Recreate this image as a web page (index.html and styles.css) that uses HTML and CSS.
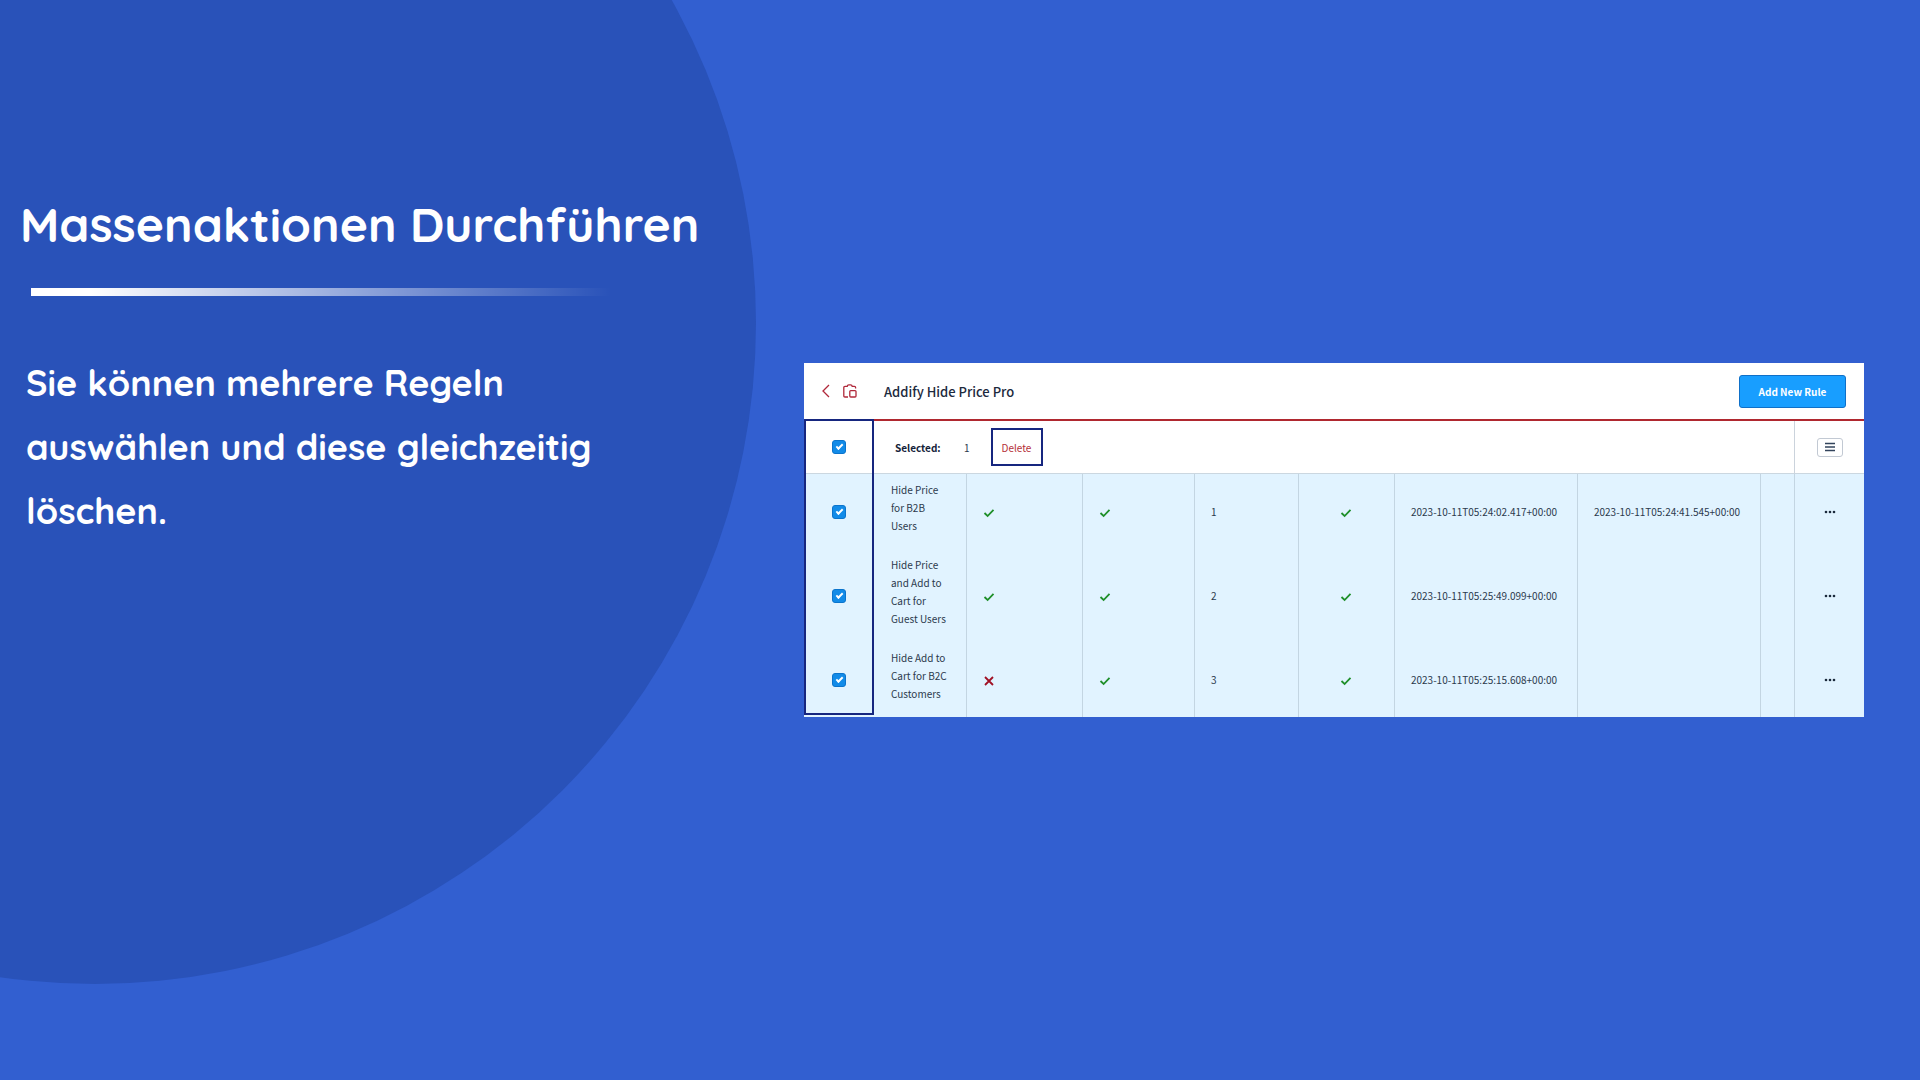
FILE: index.html
```html
<!DOCTYPE html>
<html lang="de">
<head>
  <meta charset="UTF-8" />
  <meta name="viewport" content="width=device-width, initial-scale=1.0"/>
  <title>Massenaktionen Durchführen</title>
  <link rel="stylesheet" href="styles.css">
</head>

<body>
  <svg class="sprite" aria-hidden="true">
    <symbol id="check" viewBox="0 0 12 10"><path d="M1.5 5 L4.6 8 L10.5 1.8" /></symbol>
    <symbol id="cross" viewBox="0 0 12 10"><path d="M2 1 L10 9 M10 1 L2 9" /></symbol>
    <symbol id="dots" viewBox="0 0 12 4"><circle cx="2" cy="2" r="1.3" /><circle cx="6" cy="2" r="1.3" /><circle cx="10" cy="2" r="1.3" /></symbol>
  </svg>

  <div class="slide">
    <div class="circle"></div>

    <section class="intro">
      <h1>Massenaktionen Durchführen</h1>
      <div class="line"></div>
      <p>Sie können mehrere Regeln<br>auswählen und diese gleichzeitig<br>löschen.</p>
    </section>

    <main class="panel">
      <header class="panel-header">
        <a class="back" href="#" aria-label="Back">
          <svg width="10" height="14" viewBox="0 0 10 14"><path d="M8 1 L2 7 L8 13" /></svg>
        </a>
        <svg class="plugin-icon" width="14" height="14" viewBox="0 0 14 14">
          <path d="M5 13 H2 Q0.8 13 0.8 11.8 V3.6 Q0.8 2.4 2 2.4 H4.2 Q4.4 0.8 5.8 0.8 H7.6 Q9 0.8 9.2 2.4 H11.4 Q12.6 2.4 12.6 3.6 V4.6" />
          <rect x="6.8" y="6.6" width="6.2" height="6.4" rx="1" />
        </svg>
        <h2>Addify Hide Price Pro</h2>
        <button class="btn-primary">Add New Rule</button>
      </header>

      <div class="grid">
        <table>
          <colgroup>
            <col class="c-select"><col class="c-name"><col class="c-active"><col class="c-price"><col class="c-prio">
            <col class="c-cart"><col class="c-date"><col class="c-date"><col class="c-gap"><col class="c-select">
          </colgroup>
          <thead>
            <tr>
              <th class="center"><input type="checkbox" aria-label="Select all" checked></th>
              <th colspan="8">
                <div class="bulk">
                  <span class="bulk-label">Selected:</span>
                  <span>1</span>
                  <button class="delete">Delete</button>
                </div>
              </th>
              <th class="center divider">
                <button class="list-btn" aria-label="Columns">
                  <svg width="10" height="10" viewBox="0 0 10 10"><path d="M0 1.5 H10 M0 5 H10 M0 8.5 H10" /></svg>
                </button>
              </th>
            </tr>
          </thead>
          <tbody>
            <tr>
              <td class="center"><input type="checkbox" aria-label="Select rule 1" checked></td>
              <td class="name">Hide Price for B2B Users</td>
              <td><svg class="check"><use href="#check" /></svg></td>
              <td><svg class="check"><use href="#check" /></svg></td>
              <td>1</td>
              <td class="center"><svg class="check"><use href="#check" /></svg></td>
              <td>2023-10-11T05:24:02.417+00:00</td>
              <td>2023-10-11T05:24:41.545+00:00</td>
              <td></td>
              <td class="center"><button class="more" aria-label="More"><svg><use href="#dots" /></svg></button></td>
            </tr>
            <tr>
              <td class="center"><input type="checkbox" aria-label="Select rule 2" checked></td>
              <td class="name">Hide Price and Add to Cart for Guest Users</td>
              <td><svg class="check"><use href="#check" /></svg></td>
              <td><svg class="check"><use href="#check" /></svg></td>
              <td>2</td>
              <td class="center"><svg class="check"><use href="#check" /></svg></td>
              <td>2023-10-11T05:25:49.099+00:00</td>
              <td></td>
              <td></td>
              <td class="center"><button class="more" aria-label="More"><svg><use href="#dots" /></svg></button></td>
            </tr>
            <tr>
              <td class="center"><input type="checkbox" aria-label="Select rule 3" checked></td>
              <td class="name">Hide Add to Cart for B2C Customers</td>
              <td><svg class="check cross"><use href="#cross" /></svg></td>
              <td><svg class="check"><use href="#check" /></svg></td>
              <td>3</td>
              <td class="center"><svg class="check"><use href="#check" /></svg></td>
              <td>2023-10-11T05:25:15.608+00:00</td>
              <td></td>
              <td></td>
              <td class="center"><button class="more" aria-label="More"><svg><use href="#dots" /></svg></button></td>
            </tr>
          </tbody>
        </table>
        <div class="highlight"></div>
      </div>
    </main>
  </div>
</body>
</html>
```
FILE: styles.css
```css
body {
  margin: 0;
  background-color: #325fd0;
  font-family: "Noto Sans CJK SC", "Noto Sans", sans-serif;
}

.sprite {
  display: none;
}

.slide {
  position: relative;
  overflow: hidden;
  min-height: 100vh;
  box-sizing: border-box;
  padding-right: 56px;
  display: grid;
  grid-template-columns: 44fr 58fr;
}

/* big dark disc behind the text */
.circle {
  position: absolute;
  left: -566px;
  top: -338px;
  width: 1322px;
  height: 1322px;
  border-radius: 50%;
  background-color: #2952b9;
}

.intro {
  position: relative;
  padding: 192px 20px 0;
  color: white;
  font-family: Quicksand, Lato, sans-serif;
  font-weight: bold;
}

.intro h1 {
  margin: 0;
  font-size: 48px;
  line-height: 64px;
  white-space: nowrap;
}

.line {
  width: 580px;
  height: 8px;
  margin: 32px 0 0 11px;
  background: linear-gradient(to right, white 10%, rgba(255, 255, 255, 0));
}

.intro p {
  margin: 55px 0 0 6px;
  font-size: 36px;
  line-height: 64px;
  white-space: nowrap;
}

.panel {
  position: relative;
  align-self: center;
  background-color: white;
  color: #2c3a4d;
  font-size: 10px;
}

.panel-header {
  display: flex;
  align-items: center;
  height: 56px;
  padding: 0 18px 0 17px;
  border-bottom: 2px solid #b0282f;
}

.panel-header svg {
  display: block;
  fill: none;
  stroke: #b0283a;
  stroke-width: 1.3;
}

.plugin-icon {
  margin-left: 12px;
}

.panel-header h2 {
  flex: 1;
  margin: 0 0 0 27px;
  font-size: 13px;
  font-weight: 500;
  color: #1c2a3d;
}

button {
  font: inherit;
  cursor: pointer;
}

.btn-primary {
  width: 107px;
  height: 33px;
  padding: 0;
  border: 1px solid #0f70c8;
  border-radius: 3px;
  background-color: #189eff;
  color: white;
  font-weight: bold;
}

.grid {
  position: relative;
}

table {
  width: 100%;
  table-layout: fixed;
  border-collapse: separate;
  border-spacing: 0;
}

.c-select { width: 70px; }
.c-name { width: 92px; }
.c-active { width: 116px; }
.c-price { width: 112px; }
.c-prio { width: 104px; }
.c-cart { width: 96px; }
.c-date { width: 183px; }
.c-gap { width: 34px; }

th {
  height: 52px;
  padding: 0;
  border-bottom: 1px solid #cbd7e0;
  font-weight: normal;
  text-align: left;
}

td {
  padding: 0 0 0 16px;
  border-left: 1px solid #c3d5e2;
  background-color: #e1f3ff;
  line-height: 18px;
  white-space: nowrap;
}

td:first-child,
td.name {
  border-left: none;
}

td.name {
  padding: 7px 14px 14px 17px;
  white-space: normal;
}

.center,
td.center {
  padding: 0;
  text-align: center;
}

.divider {
  border-left: 1px solid #cbd3dc;
}

input[type="checkbox"] {
  appearance: none;
  display: block;
  width: 14px;
  height: 14px;
  margin: 0 auto;
  border: 1px solid #0b74cc;
  border-radius: 3px;
  background-color: #128be8;
}

input[type="checkbox"]:checked::before {
  content: "";
  display: block;
  width: 5px;
  height: 2px;
  margin: 3px 0 0 3px;
  border: solid white;
  border-width: 0 0 2px 2px;
  transform: rotate(-45deg);
}

.bulk {
  display: flex;
  align-items: center;
  padding-left: 21px;
}

.bulk-label {
  width: 69px;
  font-weight: bold;
  color: #14233a;
}

.delete {
  width: 52px;
  height: 38px;
  margin-left: 21px;
  padding: 0;
  border: 2px solid #16267f;
  background-color: white;
  color: #b52f38;
}

.list-btn {
  display: block;
  width: 26px;
  height: 19px;
  margin: 0 auto;
  padding: 0;
  border: 1px solid #c2c9d3;
  border-radius: 3px;
  background-color: white;
}

.list-btn svg {
  display: block;
  margin: 0 auto;
  stroke: #33445c;
  stroke-width: 1.4;
}

.check {
  display: inline-block;
  width: 12px;
  height: 10px;
  vertical-align: middle;
  fill: none;
  stroke: #1f8f2a;
  stroke-width: 1.8;
}

.cross {
  stroke: #a01024;
}

.more {
  display: block;
  margin: 0 auto;
  padding: 4px;
  border: none;
  background: none;
}

.more svg {
  display: block;
  width: 12px;
  height: 4px;
  fill: #1c2a3d;
}

/* frame round the selection column */
.highlight {
  position: absolute;
  top: -2px;
  bottom: 2px;
  left: 0;
  width: 70px;
  box-sizing: border-box;
  border: 2px solid #16267f;
}
```
